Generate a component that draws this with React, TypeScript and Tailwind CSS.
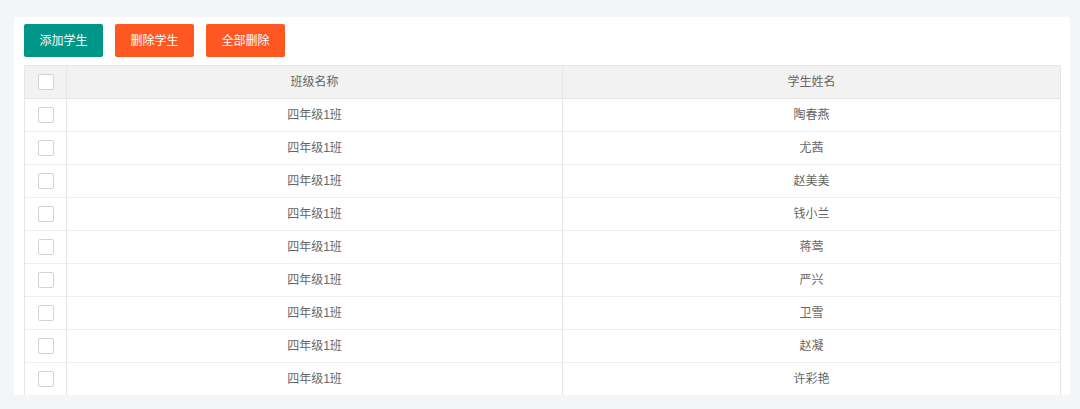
import React from "react";

const names = ["陶春燕", "尤茜", "赵美美", "钱小兰", "蒋莺", "严兴", "卫雪", "赵凝", "许彩艳"];

function Box() {
  return <div className="w-4 h-4 rounded-[2px] border border-[#d2d2d2] bg-white" />;
}

export default function App() {
  return (
    <div
      className="w-[1080px] h-[409px] bg-[#f4f5f7] pt-[17px] pl-[14px] overflow-hidden"
      style={{ fontFamily: '"Helvetica Neue", "Liberation Sans", "Noto Sans CJK SC", sans-serif' }}
    >
      <div className="w-[1056px] h-[378px] bg-white rounded-[2px] pl-[10px] pt-[7px] overflow-hidden">
        <div className="flex gap-3 mb-2">
          <button className="w-[79px] h-[33px] bg-[#009688] text-white text-[12px] rounded-[2px]">添加学生</button>
          <button className="w-[79px] h-[33px] bg-[#ff5722] text-white text-[12px] rounded-[2px]">删除学生</button>
          <button className="w-[79px] h-[33px] bg-[#ff5722] text-white text-[12px] rounded-[2px]">全部删除</button>
        </div>
        <div className="w-[1037px] border-l border-r border-t border-[#e6e6e6] text-[12px] text-[#666]">
          <div className="flex h-[33px] bg-[#f2f2f2] border-b border-[#e6e6e6]">
            <div className="w-[42px] flex items-center justify-center border-r border-[#e6e6e6]">
              <Box />
            </div>
            <div className="w-[496px] flex items-center justify-center border-r border-[#e6e6e6]">班级名称</div>
            <div className="flex-1 flex items-center justify-center">学生姓名</div>
          </div>
          {names.map((n) => (
            <div key={n} className="flex h-[33px] border-b border-[#eeeeee]">
              <div className="w-[42px] flex items-center justify-center border-r border-[#e6e6e6]">
                <Box />
              </div>
              <div className="w-[496px] flex items-center justify-center border-r border-[#e6e6e6]">四年级1班</div>
              <div className="flex-1 flex items-center justify-center">{n}</div>
            </div>
          ))}
        </div>
      </div>
    </div>
  );
}
